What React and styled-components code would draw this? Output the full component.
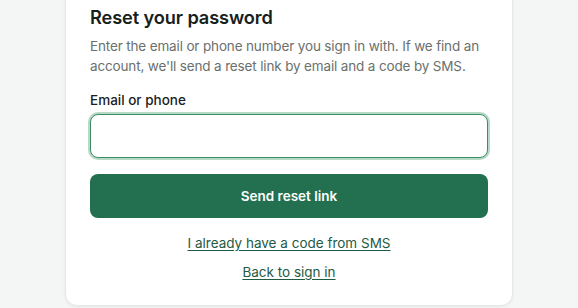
import styled, { createGlobalStyle } from 'styled-components';

const GlobalStyle = createGlobalStyle`
  html, body {
    margin: 0;
    padding: 0;
    background: #f4f5f5;
    font-family: Inter, "Noto Sans", sans-serif;
    -webkit-font-smoothing: antialiased;
  }
  * {
    box-sizing: border-box;
  }
`;

export default function App() {
  return (
    <>
      <GlobalStyle />
      <Page>
        <Card>
          <Title>Reset your password</Title>
          <Description>
            Enter the email or phone number you sign in with. If we find an
            account, we'll send a reset link by email and a code by SMS.
          </Description>
          <Field>
            <Label htmlFor="contact">Email or phone</Label>
            <Input id="contact" type="text" />
          </Field>
          <Submit type="button">Send reset link</Submit>
          <Links>
            <TextLink href="#">I already have a code from SMS</TextLink>
            <TextLink href="#">Back to sign in</TextLink>
          </Links>
        </Card>
      </Page>
    </>
  );
}

const Page = styled.div`
  display: flex;
  justify-content: center;
  height: 308px;
  overflow: hidden;
`;

const Card = styled.div`
  width: 448px;
  margin-top: -20px;
  align-self: flex-start;
  display: flex;
  flex-direction: column;
  padding: 24px 24px 23px;
  background: #ffffff;
  border: 1px solid #e6e8e7;
  border-radius: 12px;
  box-shadow: 0px 1px 3px 0px rgba(0, 0, 0, 0.06);
`;

const Title = styled.h2`
  margin: 0;
  font-size: 18.2px;
  line-height: 24px;
  font-weight: 600;
  color: #17211c;
  letter-spacing: -0.1px;
`;

const Description = styled.p`
  margin: 7px 0 0;
  font-size: 13.5px;
  line-height: 20px;
  letter-spacing: -0.15px;
  color: #6b706d;
`;

const Field = styled.div`
  display: flex;
  flex-direction: column;
  gap: 4px;
  margin-top: 14px;
`;

const Label = styled.label`
  font-size: 13.5px;
  line-height: 20px;
  font-weight: 500;
  color: #1a221e;
`;

const Input = styled.input`
  height: 44px;
  width: 100%;
  padding: 0 12px;
  border: 1px solid #3e8b66;
  border-radius: 8px;
  box-shadow: 0 0 0 2px #b7dac8;
  font-family: inherit;
  font-size: 15px;
  outline: none;
  background: #fff;
`;

const Submit = styled.button`
  margin-top: 16px;
  height: 44px;
  border: none;
  border-radius: 8px;
  background: #22704f;
  color: #ffffff;
  font-family: inherit;
  font-size: 13.5px;
  font-weight: 600;
  cursor: pointer;
`;

const Links = styled.div`
  display: flex;
  flex-direction: column;
  align-items: center;
  gap: 9px;
  margin-top: 15px;
`;

const TextLink = styled.a`
  font-size: 13.5px;
  line-height: 20px;
  color: #1f5a43;
  text-decoration: underline;
  text-underline-offset: 2px;
`;
